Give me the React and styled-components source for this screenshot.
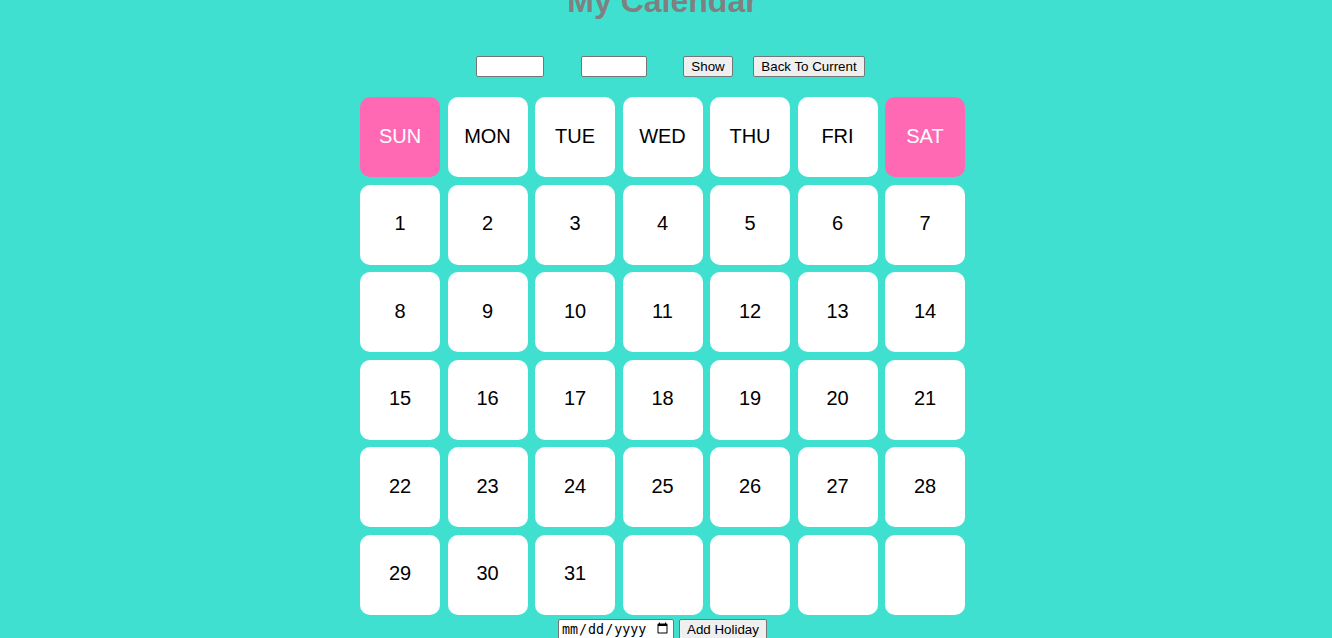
import React from "react";
import styled, { createGlobalStyle } from "styled-components";

const Global = createGlobalStyle`
  html, body { margin: 0; padding: 0; background: #40e0d0; overflow: hidden; }
  body { font-family: "Liberation Sans", Arial, sans-serif; }
`;

const Page = styled.div`
  width: 1325px;
  display: flex;
  flex-direction: column;
  align-items: center;
`;

const Title = styled.h1`
  margin: -17px 0 0 0;
  font-size: 32px;
  line-height: 37px;
  font-weight: bold;
  color: #808080;
  font-family: "Liberation Sans", Arial, sans-serif;
`;

const Controls = styled.div`
  display: flex;
  align-items: center;
  margin-top: 36px;
  padding-left: 16px;
  height: 21px;
`;

const TextInput = styled.input`
  box-sizing: border-box;
  width: ${(p) => p.$w}px;
  height: 21px;
  margin-right: ${(p) => p.$mr}px;
  border: 1px solid #767676;
  border-radius: 2px;
  background: #fff;
  padding: 1px 2px;
  font: 13.33px "Liberation Sans", Arial, sans-serif;
`;

const Btn = styled.button`
  box-sizing: border-box;
  height: 21px;
  width: ${(p) => p.$w}px;
  margin-right: ${(p) => p.$mr || 0}px;
  padding: 0;
  border: 1px solid #767676;
  border-radius: 2px;
  background: #efefef;
  color: #000;
  font: 13.33px "Liberation Sans", Arial, sans-serif;
`;

const Grid = styled.div`
  display: grid;
  grid-template-columns: repeat(7, 80px);
  grid-auto-rows: 80px;
  gap: 7.5px 7.5px;
  margin-top: 20px;
`;

const Cell = styled.div`
  box-sizing: border-box;
  padding-bottom: 2px;
  border-radius: 10px;
  background: ${(p) => (p.$weekend ? "#ff69b4" : "#ffffff")};
  color: ${(p) => (p.$weekend ? "#ffffff" : "#000000")};
  display: flex;
  align-items: center;
  justify-content: center;
  font-size: 20px;
  font-family: "Liberation Sans", Arial, sans-serif;
`;

const Footer = styled.div`
  display: flex;
  align-items: center;
  margin-top: 4px;
  gap: 5px;
`;

const DateInput = styled.input`
  box-sizing: border-box;
  width: 116px;
  height: 21px;
  border: 1px solid #767676;
  border-radius: 2px;
  background: #fff;
  font-size: 13.33px;
  padding: 1px 2px;
`;

const days = ["SUN", "MON", "TUE", "WED", "THU", "FRI", "SAT"];
const nums = [];
for (let i = 1; i <= 35; i++) nums.push(i <= 31 ? i : "");

export default function App() {
  return (
    <>
      <Global />
      <Page>
        <Title>My Calendar</Title>
        <Controls>
          <TextInput $w={68} $mr={37} />
          <TextInput $w={66} $mr={36} />
          <Btn $w={50} $mr={20}>Show</Btn>
          <Btn $w={112}>Back To Current</Btn>
        </Controls>
        <Grid>
          {days.map((d, i) => (
            <Cell key={d} $weekend={i === 0 || i === 6}>{d}</Cell>
          ))}
          {nums.map((n, i) => (
            <Cell key={i}>{n}</Cell>
          ))}
        </Grid>
        <Footer>
          <DateInput type="date" />
          <Btn $w={88}>Add Holiday</Btn>
        </Footer>
      </Page>
    </>
  );
}
